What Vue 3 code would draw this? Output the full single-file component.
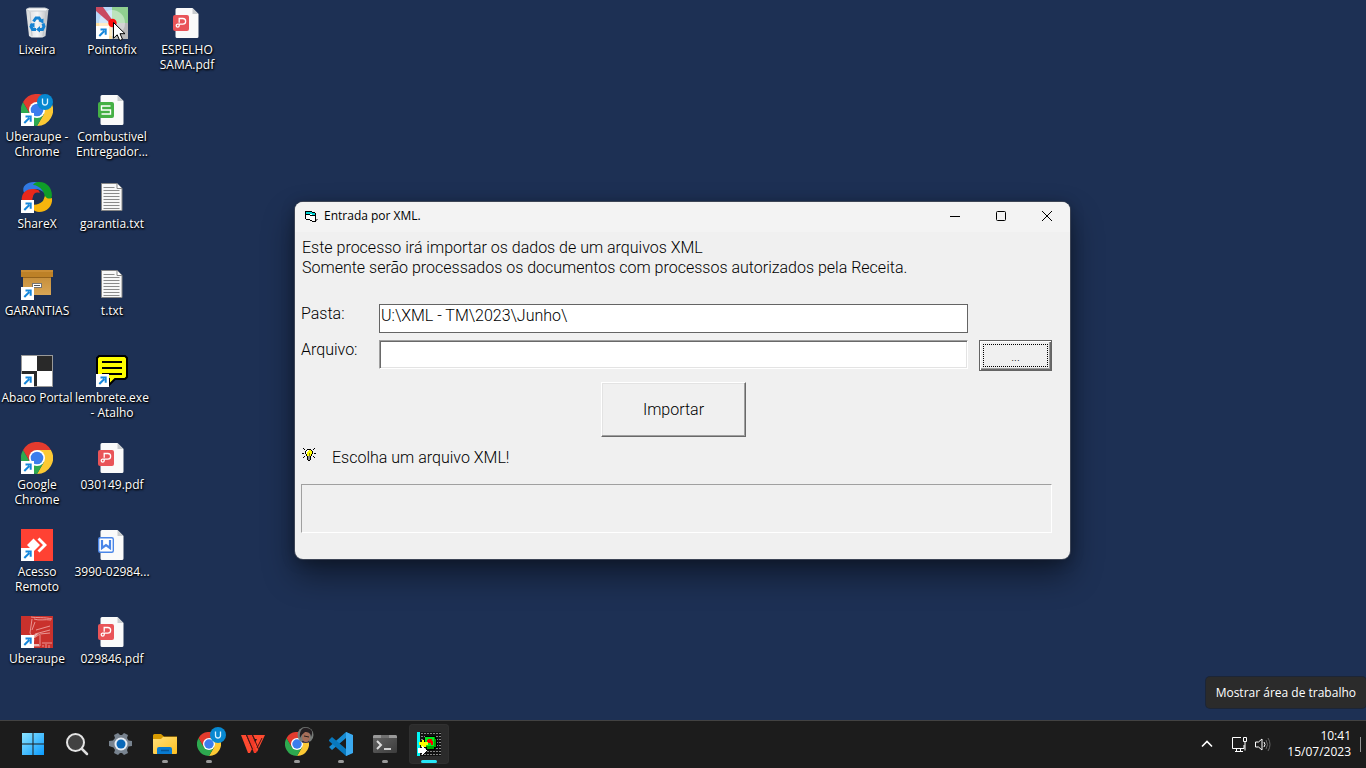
<script setup>
import { ref } from 'vue'

const shortcuts = [
  { icon: 'bin', label: 'Lixeira' },
  { icon: 'chrome', label: 'Uberaupe - Chrome', link: true, badge: true },
  { icon: 'sharex', label: 'ShareX', link: true },
  { icon: 'box', label: 'GARANTIAS', link: true },
  { icon: 'abaco', label: 'Abaco Portal', link: true },
  { icon: 'chrome', label: 'Google Chrome', link: true },
  { icon: 'anydesk', label: 'Acesso Remoto', link: true },
  { icon: 'truck', label: 'Uberaupe', link: true },
  { icon: 'pointofix', label: 'Pointofix', link: true },
  { icon: 'sheet', label: 'Combustivel Entregador...' },
  { icon: 'txt', label: 'garantia.txt' },
  { icon: 'txt', label: 't.txt' },
  { icon: 'note', label: 'lembrete.exe - Atalho', link: true },
  { icon: 'pdf', label: '030149.pdf' },
  { icon: 'doc', label: '3990-02984...' },
  { icon: 'pdf', label: '029846.pdf' },
  { icon: 'pdf', label: 'ESPELHO SAMA.pdf' }
]

const tasks = [
  { icon: 'start', name: 'Iniciar' },
  { icon: 'search', name: 'Pesquisar' },
  { icon: 'gear', name: 'Configurações' },
  { icon: 'folder', name: 'Explorador de Arquivos', open: true },
  { icon: 'chromeu', name: 'Uberaupe - Chrome', open: true },
  { icon: 'wps', name: 'WPS Office' },
  { icon: 'chromep', name: 'Google Chrome', open: true },
  { icon: 'code', name: 'Visual Studio Code', open: true },
  { icon: 'term', name: 'Terminal', open: true },
  { icon: 'erp', name: 'Entrada por XML', open: true, active: true }
]

const folder = ref('U:\\XML - TM\\2023\\Junho\\')
const file = ref('')
</script>

<template>
  <div class="screen">
    <svg class="defs" aria-hidden="true">
      <defs>
        <linearGradient id="gWin" x1="0" y1="0" x2="1" y2="1">
          <stop offset="0" stop-color="#8be4ff" /><stop offset="1" stop-color="#0a9bff" />
        </linearGradient>
        <linearGradient id="gFolder" x1="0" y1="0" x2="1" y2="1">
          <stop offset="0" stop-color="#ffe07a" /><stop offset="1" stop-color="#ffc020" />
        </linearGradient>
        <linearGradient id="gBox" x1="0" y1="0" x2="0" y2="1">
          <stop offset="0" stop-color="#c68f3c" /><stop offset="1" stop-color="#d9a655" />
        </linearGradient>
        <linearGradient id="gBin" x1="0" y1="0" x2="1" y2="0">
          <stop offset="0" stop-color="#d5d8da" /><stop offset=".5" stop-color="#f4f5f6" /><stop offset="1" stop-color="#b9bdc1" />
        </linearGradient>
        <linearGradient id="gTerm" x1="0" y1="0" x2="1" y2="1">
          <stop offset="0" stop-color="#666" /><stop offset="1" stop-color="#3c3c3c" />
        </linearGradient>
        <clipPath id="cFace"><circle cx="20.500" cy="3" r="8" /></clipPath>
      </defs>

      <symbol id="chrome" viewBox="0 0 32 32">
        <path d="M29.900 8H16v8l6.900 4L16 32A16 16 0 0 0 29.900 8Z" fill="#fcc934" />
        <path d="M2.100 8 9.100 20 16 16l6.900 4L16 32A16 16 0 0 1 2.100 8Z" fill="#2da94f" />
        <path d="M2.100 8A16 16 0 0 1 29.900 8H16l-6.900 12Z" fill="#e33b2e" />
        <circle cx="16" cy="16" r="8" fill="#fff" /><circle cx="16" cy="16" r="6.300" fill="#3b7ded" />
      </symbol>
      <symbol id="ubadge" viewBox="0 0 16 16">
        <circle cx="8" cy="8" r="8" fill="#0788d1" />
        <path d="M5.500 4.500v4a2.500 2.500 0 0 0 5 0v-4" fill="none" stroke="#d9f2ff" stroke-width="1.300" />
      </symbol>
      <symbol id="link" viewBox="0 0 13 13">
        <path d="M0 0h13v13H0Z" fill="#fff" />
        <path d="m3.300 10 5-5M4.500 3.500h5.200v5.200" fill="none" stroke="#1687dc" stroke-width="2" />
      </symbol>
      <symbol id="bin" viewBox="0 0 32 32">
        <path d="M5 2.500 8 1h16l3.500 1.500L24.500 29l-3 1.500h-11L8 29Z" fill="url(#gBin)" />
        <path d="M5 2.500 8 1h16l3.500 1.500-3 1.500H8Z" fill="#fafbfb" stroke="#c5cacf" />
        <path d="m9 5 2 24m14-24-3 24" stroke="#c0c4c8" />
        <g fill="none" stroke="#1482d2" stroke-width="3">
          <path d="m12.500 14.500 2.500-3.500h3l2 3" /><path d="m22 16.500 1 3-1.500 3H18" /><path d="M15 22.500h-3.500l-1.500-3 1.500-2.500" />
        </g>
        <path d="m17.500 14 5-2.500v5.200ZM19 19l-4 3.500 4 3ZM8.500 17l5-1v5Z" fill="#1482d2" />
      </symbol>
      <symbol id="pointofix" viewBox="0 0 32 32">
        <path d="M0 0h16v16H0Z" fill="#b8d8f8" /><path d="M16 0h16v16H16Z" fill="#90d090" />
        <path d="M0 16h16v16H0Z" fill="#ffe0a0" /><path d="M16 16h16v16H16Z" fill="#b8b8b8" />
        <circle cx="16" cy="16" r="13" fill="#fff" opacity=".4" />
        <path d="M0 0h7l10 14-2 3L0 4Z" fill="#c94a60" /><circle cx="16.500" cy="16" r="4.200" fill="#fb0d0d" />
      </symbol>
      <symbol id="page" viewBox="0 0 32 32">
        <path d="M6 1h15.500l6 6v22.500a1.500 1.500 0 0 1-1.500 1.500H6a1.500 1.500 0 0 1-1.500-1.500v-27A1.500 1.500 0 0 1 6 1Z" fill="#fafafa" />
        <path d="m21.500 1 6 6h-6Z" fill="#c9cccf" />
      </symbol>
      <symbol id="pdf" viewBox="0 0 32 32">
        <use href="#page" /><rect x="2" y="8" width="16" height="16" rx="2" fill="#e95458" />
        <path d="M8.200 15.800v-4.300h3.600a2.800 2.800 0 0 1 0 5.700H6.500a1.500 1.500 0 1 0 1.700 1.600v-1" fill="none" stroke="#fff" stroke-width="1.300" />
      </symbol>
      <symbol id="sheet" viewBox="0 0 32 32">
        <use href="#page" /><rect x="2" y="8" width="16" height="16" rx="2" fill="#45b045" />
        <path d="M14.500 12h-9v4h9v4h-9" fill="none" stroke="#fff" stroke-width="1.400" />
      </symbol>
      <symbol id="doc" viewBox="0 0 32 32">
        <use href="#page" /><rect x="2.700" y="8.700" width="14.600" height="14.600" rx="1.500" fill="#fff" stroke="#4a86e8" stroke-width="1.400" />
        <path d="M6 11v8l4-3 4 3v-8" fill="none" stroke="#4a86e8" stroke-width="2.200" />
      </symbol>
      <symbol id="txt" viewBox="0 0 32 32">
        <path d="M5.500 2.500h15.500l5 5v22H5.500Z" fill="#f8f8f8" stroke="#858585" />
        <path d="M21 2.500v5h5" fill="#fff" stroke="#858585" />
        <path d="M7.500 6.500h11m-11 3h16m-16 3h16m-16 3h16m-16 3h16m-16 3h16m-16 3h16m-16 3h16" stroke="#8b8b8b" />
      </symbol>
      <symbol id="sharex" viewBox="0 0 32 32">
        <path d="M3 12C0 5 6 1 13 1c9-1 13 7 12 13-3-5-10-8-15-4-3 0-5 0-7 2Z" fill="#3179e3" />
        <path d="M17 1c12-1 17 12 12 19-2 4-8 5-11 3 5-2 8-8 3-14-2-3-6-5-9-5 1-2 3-3 5-3Z" fill="#0f9d29" />
        <path d="M31 17c1 8-5 14-13 14-5 0-8-4-8-8 3 2 9 0 12-3l2-5c2 3 4 3 7 2Z" fill="#f7b50d" />
        <path d="M1 16C2 10 9 6 17 9c2 1 2 4 1 4-5-1-8 4-6 9-5 7-13 0-11-6Z" fill="#ea281b" />
        <circle cx="16.500" cy="16" r="4.500" fill="#1d3054" />
      </symbol>
      <symbol id="box" viewBox="0 0 32 32">
        <path d="M2 9h28v18H2Z" fill="url(#gBox)" /><path d="M0 2h32v7H0Z" fill="#bd8127" /><path d="M0 2h32v2H0Z" fill="#c98d35" />
        <path d="M2 9h28v1H2Z" fill="#94621a" /><rect x="11.500" y="15.500" width="9" height="4" fill="#fff" stroke="#757575" /><path d="M13 17.500h6" stroke="#555" />
      </symbol>
      <symbol id="abaco" viewBox="0 0 32 32">
        <path d="M0 0h32v32H0Z" fill="#999" /><path d="M1 1h15v15H1Zm15 15h15v15H16Z" fill="#fff" /><path d="M16 1h15v15H16ZM1 16h15v15H1Z" fill="#292929" />
      </symbol>
      <symbol id="anydesk" viewBox="0 0 32 32">
        <path d="M0 0h32v32H0Z" fill="#ff4133" /><path d="m6 16 6.500-6.500L19 16l-6.500 6.500ZM16.500 10.500l2-2L26 16l-7.500 7.500-2-2L22 16Z" fill="#fff" />
      </symbol>
      <symbol id="truck" viewBox="0 0 32 32">
        <path d="M0 0h32v32H0Z" fill="#c9312c" />
        <g fill="none" stroke="#eda29f" stroke-width=".9">
          <path d="M10 1c5 1 14 0 21 2M11 3 9 17l3 5M13 3c5 2 11 0 17 1M14 6l-3 8M15 14l14-4M14 18l15-4M13 22l6-4 10-1M13 23l-1 6m1 1h6M19 19v11m2-3h10M22 29v2m3-3v4m3-3v3" />
        </g>
        <path d="m12 19 6-2-5 5Zm1 9h5v2h-5Z" fill="#e9b9b5" />
      </symbol>
      <symbol id="note" viewBox="0 0 32 32">
        <path d="M3 1h26l2 2v19l-2 2H19l-6 6v-6H3l-2-2V3Z" fill="#ff0" stroke="#000" stroke-width="2" />
        <path d="M6 7h20M6 13h20M6 19h20" stroke="#000" stroke-width="2" />
      </symbol>

      <symbol id="start" viewBox="0 0 24 24">
        <path d="M1 1h10.500v10.500H1Zm11.500 0H23v10.500H12.500ZM1 12.500h10.500V23H1Zm11.500 0H23V23H12.500Z" fill="url(#gWin)" />
      </symbol>
      <symbol id="search" viewBox="0 0 24 24">
        <circle cx="10.500" cy="10.500" r="8.500" fill="#414141" stroke="#e4e4e4" stroke-width="2" /><path d="m17 17 5 5" stroke="#ddd" stroke-width="2.500" stroke-linecap="round" />
      </symbol>
      <symbol id="gear" viewBox="0 0 24 24">
        <path d="m9 1 2 2h2l2-2 4 2-1 3 1.500 2.500 3.500.5v5l-3.500.5L18 18l1 3-4 2-2-2h-2l-2 2-4-2 1-3-1.500-2.500L0 14V9l4-.5L6 6 5 3Z" fill="#78838f" />
        <circle cx="12" cy="12" r="6.500" fill="#e7edf4" /><circle cx="12" cy="12" r="4.500" fill="#0968b8" />
      </symbol>
      <symbol id="folder" viewBox="0 0 24 24">
        <path d="M0 3.500A1.500 1.500 0 0 1 1.500 2H8l3 2.500h13V20H0Z" fill="#d79a00" /><path d="M0 7h8l2-2h14v16a1 1 0 0 1-1 1H1a1 1 0 0 1-1-1Z" fill="url(#gFolder)" />
        <path d="M4 22v-5a2 2 0 0 1 2-2h11a2 2 0 0 1 2 2v5Z" fill="#087bd1" /><path d="M8 18.500h8" stroke="#055698" stroke-width="1.500" />
      </symbol>
      <symbol id="chromeu" viewBox="0 0 24 24" overflow="visible">
        <use href="#chrome" width="24" height="24" /><use href="#ubadge" x="13" y="-5" width="16" height="16" />
      </symbol>
      <symbol id="chromep" viewBox="0 0 24 24" overflow="visible">
        <use href="#chrome" width="24" height="24" />
        <g clip-path="url(#cFace)">
          <path d="M11-6h20v20H11Z" fill="#777b78" /><path d="m15 14 2-5 6-1 6 6Z" fill="#393342" />
          <ellipse cx="21" cy="4.500" rx="4" ry="5.500" fill="#a66e59" /><path d="M15 6c-1-8 3-11 7-10 6 1 6 5 4 9 0-4-3-5-6-5-2 2-3 2-5 6Z" fill="#241f22" /><path d="m19 4 5 1" stroke="#2b211f" />
        </g>
      </symbol>
      <symbol id="wps" viewBox="0 0 24 24">
        <path d="M0 3h5l6 14-2 4H7Z" fill="#ff4a30" />
        <path d="M6 3h5l6 14-2 4h-2Z" fill="#f23a28" />
        <path d="M12 3h12l-8 17-3-7 3-6h-2Z" fill="#ff4a30" />
        <path d="m5.500 3 6 14m0-14 6 14M21 6l-5 10" fill="none" stroke="#4a1714" />
      </symbol>
      <symbol id="code" viewBox="0 0 24 24">
        <path d="m17 0 6 3v18l-6 3V6L3 18l-3-3Z" fill="#168bd2" /><path d="m0 8 3-3 14 12v7L0 9Z" fill="#0878bd" /><path d="m17 0 7 3v18l-7 3Z" fill="#3baaf0" />
      </symbol>
      <symbol id="term" viewBox="0 0 24 24">
        <rect y="3" width="24" height="18" rx="1.500" fill="url(#gTerm)" /><path d="M1.500 3h21A1.500 1.500 0 0 1 24 4.500V6H0V4.500A1.500 1.500 0 0 1 1.500 3Z" fill="#999" /><path d="M8 3h8v3H8Z" fill="#707070" />
        <path d="m4 9 4 4-4 4" fill="none" stroke="#ddd" stroke-width="2" /><path d="M11 17h7" stroke="#fff" stroke-width="1.500" />
      </symbol>
      <symbol id="erp" viewBox="0 0 24 24" shape-rendering="crispEdges">
        <path d="M0 0h24v24H0Z" fill="#111" /><path d="M0 0h3v24H0Z" fill="#00f5f5" />
        <path d="M4 1.500h20M4 4.500h20M4 7.500h20M4 10.500h20M4 13.500h20M4 16.500h20M4 19.500h20M4 22.500h20" stroke="#858585" stroke-dasharray="2 1" />
        <path d="M8 4h10v2h1v9h-2v2H9v-2H7V6h1Z" fill="#0a0" stroke="#000" /><path d="M8 5h9v9H8Z" fill="#00ee20" /><path d="M11 7h4v2h1v4h-2v-2h-4V8h1Z" fill="#f00" />
        <path d="M2 10h3V8h2v2h4v3H9v2H4v-2H2Z" fill="#ff0" /><path d="M1 16h4v-2l5 4-5 5v-2H1Z" fill="#fff" />
      </symbol>
    </svg>

    <main class="desktop">
      <button v-for="(s, i) in shortcuts" :key="i" class="shortcut" type="button">
        <svg class="pic" viewBox="0 0 32 32" aria-hidden="true">
          <use :href="'#' + s.icon" width="32" height="32" />
          <use v-if="s.badge" href="#ubadge" x="16" width="16" height="16" />
          <use v-if="s.link" href="#link" y="19" width="13" height="13" />
        </svg>
        <span :class="{ single: !s.label.includes(' ') }">{{ s.label }}</span>
      </button>

      <section class="window" aria-label="Entrada por XML.">
        <header class="titlebar">
          <svg class="formicon" viewBox="0 0 14 14" shape-rendering="crispEdges" aria-hidden="true">
            <path d="M2 3h6v1h4v8H9v-1H2Z" fill="#fff" /><path d="M2 3h6v1h3v2H8V5H2Z" fill="#00d5d5" />
            <path d="M1 2h7v1H1ZM1 3h1v7H1Zm1 7h4v1H2Zm4 1h2v1H6Zm2 1h4v1H8Zm3-8h1v9h-1ZM8 3h3v1H8ZM2 5h4v1H2Zm4 1h5v1H6Z" fill="#000" /><path d="M12 10h2v1h-1v1h-1Z" fill="#777" />
          </svg>
          <h1>Entrada por XML.</h1>
          <div class="controls">
            <button type="button" aria-label="Minimizar"><svg viewBox="0 0 12 12"><path d="M1 6.500h10" /></svg></button>
            <button type="button" aria-label="Maximizar"><svg viewBox="0 0 12 12"><rect x="1.500" y="1.500" width="9" height="9" rx="1" /></svg></button>
            <button type="button" aria-label="Fechar"><svg viewBox="0 0 12 12"><path d="m1 1 10 10M11 1 1 11" /></svg></button>
          </div>
        </header>
        <form class="form" @submit.prevent>
          <p class="intro">Este processo irá importar os dados de um arquivos XML<br>Somente serão processados os documentos com processos autorizados pela Receita.</p>
          <div class="fields">
            <label for="pasta">Pasta:</label>
            <input id="pasta" v-model="folder" class="flat" type="text" spellcheck="false">
            <span></span>
            <label for="arquivo">Arquivo:</label>
            <input id="arquivo" v-model="file" class="sunken" type="text">
            <button class="browse" type="button" aria-label="Procurar arquivo"><span>...</span></button>
          </div>
          <button class="import" type="submit">Importar</button>
          <p class="tip">
            <svg viewBox="0 0 14 14" shape-rendering="crispEdges" aria-hidden="true">
              <path d="M5 1h4v1h1v1h1v3h-1v2H9v4H8v1H6v-1H5V8H4V6H3V3h1V2h1Z" fill="#000" />
              <path d="M5 2h4v1h1v3H9v2H8v1H6V8H5V6H4V3h1Z" fill="#ff0" /><path d="M5 2h2v1H6v1H5v2H4V3h1Z" fill="#fff" /><path d="M6 8h2v4H6Z" fill="#888" /><path d="M7 5h1v3H7Z" fill="#888800" />
              <path d="M1 0h1v1h1v1H2V1H1Zm11 0h1v1h-1v1h-1V1h1ZM0 5h2v1H0Zm12 0h2v1h-2ZM2 8h1v1H2v1H1V9h1Zm9 0h1v1h1v1h-1V9h-1Z" fill="#000" />
            </svg>
            <span>Escolha um arquivo XML!</span>
          </p>
          <div class="panel"></div>
        </form>
      </section>

      <div class="tooltip" role="tooltip">Mostrar área de trabalho</div>
      <svg class="cursor" viewBox="0 0 13 19" aria-hidden="true">
        <path d="M.5.500v15.800l3.700-3.500 2.500 5.700 2.800-1.200L7 11.700h5Z" fill="#fff" stroke="#000" />
      </svg>
    </main>

    <footer class="taskbar">
      <nav class="tasks" aria-label="Barra de tarefas">
        <button v-for="t in tasks" :key="t.icon" type="button" :class="{ open: t.open, active: t.active }" :aria-label="t.name">
          <svg viewBox="0 0 24 24" aria-hidden="true"><use :href="'#' + t.icon" width="24" height="24" /></svg>
        </button>
      </nav>
      <div class="tray">
        <button class="chev" type="button" aria-label="Mostrar ícones ocultos"><svg viewBox="0 0 12 12"><path d="m1 8.500 5-5 5 5" stroke-width="1.600" /></svg></button>
        <button class="status" type="button" aria-label="Rede e volume">
          <svg viewBox="0 0 17 17"><path d="M10 1.500H1.500v11H13V9M4 15.500h8M5.500 13v2m4-2v2" /><path d="M12.500 1.500h3v4h-3ZM14 5.500v9" /></svg>
          <svg viewBox="0 0 17 17"><path d="M1.500 6v5h3l3.500 3V3L4.500 6Z" /><path d="M10 6q2 2.500 0 5" /><path d="M12 4q3 4.500 0 9M14 2q4 6.500 0 13" stroke="#666" /></svg>
        </button>
        <button class="clock" type="button"><span>10:41</span><span>15/07/2023</span></button>
        <button class="peek" type="button" aria-label="Mostrar área de trabalho"></button>
      </div>
    </footer>
  </div>
</template>

<style>
body { margin: 0; overflow: hidden; background: #1d3054; }
</style>

<style scoped>
.screen { height: 100vh; display: flex; flex-direction: column; overflow: hidden; font: 12px/15px "Open Sans", sans-serif; }
.defs { position: absolute; width: 0; height: 0; }
button { border: 0; padding: 0; background: none; color: inherit; font: inherit; }
button, input { border-radius: 0; box-sizing: border-box; outline: 0; }

.desktop { position: relative; flex: 1; min-height: 0; background: #1d3054; display: grid; grid-auto-flow: column; grid-template-rows: repeat(8, 87px); grid-auto-columns: 74px; column-gap: 1px; }
.shortcut { display: flex; flex-direction: column; align-items: center; justify-content: flex-start; gap: 3px; padding-top: 7px; color: #fff; text-shadow: 1px 1px 2px #000, 0 1px 2px #000; }
.shortcut span { text-align: center; }
.shortcut .single { white-space: nowrap; }
.pic { width: 32px; height: 32px; flex: none; }

.window { position: absolute; left: 295px; top: 202px; width: 775px; border-radius: 8px; background: #f0f0f0; color: #000; box-shadow: 0 0 0 1px #3d4556, 0 16px 32px rgba(0, 0, 0, .45), 0 2px 14px rgba(0, 0, 0, .25); overflow: hidden; }
.titlebar { display: flex; align-items: flex-start; height: 30px; padding-left: 9px; background: #f3f3f3; }
.formicon { width: 14px; height: 14px; margin: 7px 6px 0 0; }
h1 { flex: 1; margin: 0; font-size: 12px; line-height: 28px; font-weight: 400; }
.controls { display: flex; }
.controls button { width: 46px; height: 28px; display: grid; place-items: center; }
.controls svg { width: 12px; height: 12px; fill: none; stroke: #000; }

.form { padding: 6px 18px 26px 6px; font: 300 16px/20px Roboto, sans-serif; }
.intro { margin: 0 0 26px 1px; }
.fields { display: grid; grid-template-columns: 78px 1fr 73px; row-gap: 7px; }
.fields input { height: 29px; margin-right: 11px; min-width: 0; background: #fff; color: #000; font: inherit; }
.flat { border: 1px solid #646464; padding: 0 1px 6px; }
.sunken { border: 1px solid; border-color: #a0a0a0 #fff #fff #a0a0a0; box-shadow: inset 1px 1px #696969, inset -1px -1px #e3e3e3; padding: 0 2px; }
.browse { height: 31px; padding: 3px; border: 1px solid #646464; box-shadow: inset 1px 1px #fff, inset -1px -1px #696969, inset -2px -2px #a0a0a0; font: 300 12px/12px Roboto, sans-serif; }
.browse span { display: flex; align-items: center; justify-content: center; height: 100%; box-sizing: border-box; border: 1px dotted #000; padding-top: 2px; }
.import { display: block; width: 145px; height: 55px; margin: 11px 0 0 300px; border: 1px solid; border-color: #fff #696969 #696969 #fff; box-shadow: inset -1px -1px #a0a0a0, inset 1px 1px #e3e3e3; }
.tip { display: flex; align-items: flex-start; gap: 16px; margin: 11px 0 16px 1px; }
.tip svg { width: 14px; height: 14px; }
.panel { height: 49px; box-sizing: border-box; border: 1px solid; border-color: #a0a0a0 #fff #fff #a0a0a0; }

.tooltip { position: absolute; right: 0; bottom: 12px; padding: 8px 10px; background: #2b2b2b; color: #fff; border-radius: 4px; box-shadow: 0 0 0 1px #1c2536; }
.cursor { position: absolute; left: 113px; top: 22px; width: 13px; height: 19px; }

.taskbar { display: flex; justify-content: space-between; height: 47px; border-top: 1px solid #424242; background: #1c1c1c; color: #fff; }
.tasks { display: flex; align-items: flex-start; gap: 4px; padding: 3px 0 0 13px; }
.tasks button { position: relative; width: 40px; height: 40px; display: grid; place-items: center; border-radius: 4px; }
.tasks svg { width: 24px; height: 24px; overflow: visible; }
.tasks .active { background: #2b2b2b; box-shadow: inset 0 0 0 1px #303030; }
.tasks .open::after { content: ""; position: absolute; left: 17px; bottom: 1px; width: 6px; height: 3px; border-radius: 2px; background: #999; }
.tasks .active::after { left: 12px; width: 16px; background: #25e5f5; }
.tray { display: flex; align-items: center; padding-bottom: 1px; }
.tray svg { fill: none; stroke: #fff; }
.chev { display: flex; margin-right: 18px; }
.chev svg { width: 12px; height: 12px; }
.status { display: flex; gap: 6px; margin-right: 16px; }
.status svg { width: 17px; height: 17px; }
.clock { display: flex; flex-direction: column; text-align: right; line-height: 16px; }
.peek { width: 1px; height: 15px; margin: 0 5px 0 9px; background: #929292; }
</style>
